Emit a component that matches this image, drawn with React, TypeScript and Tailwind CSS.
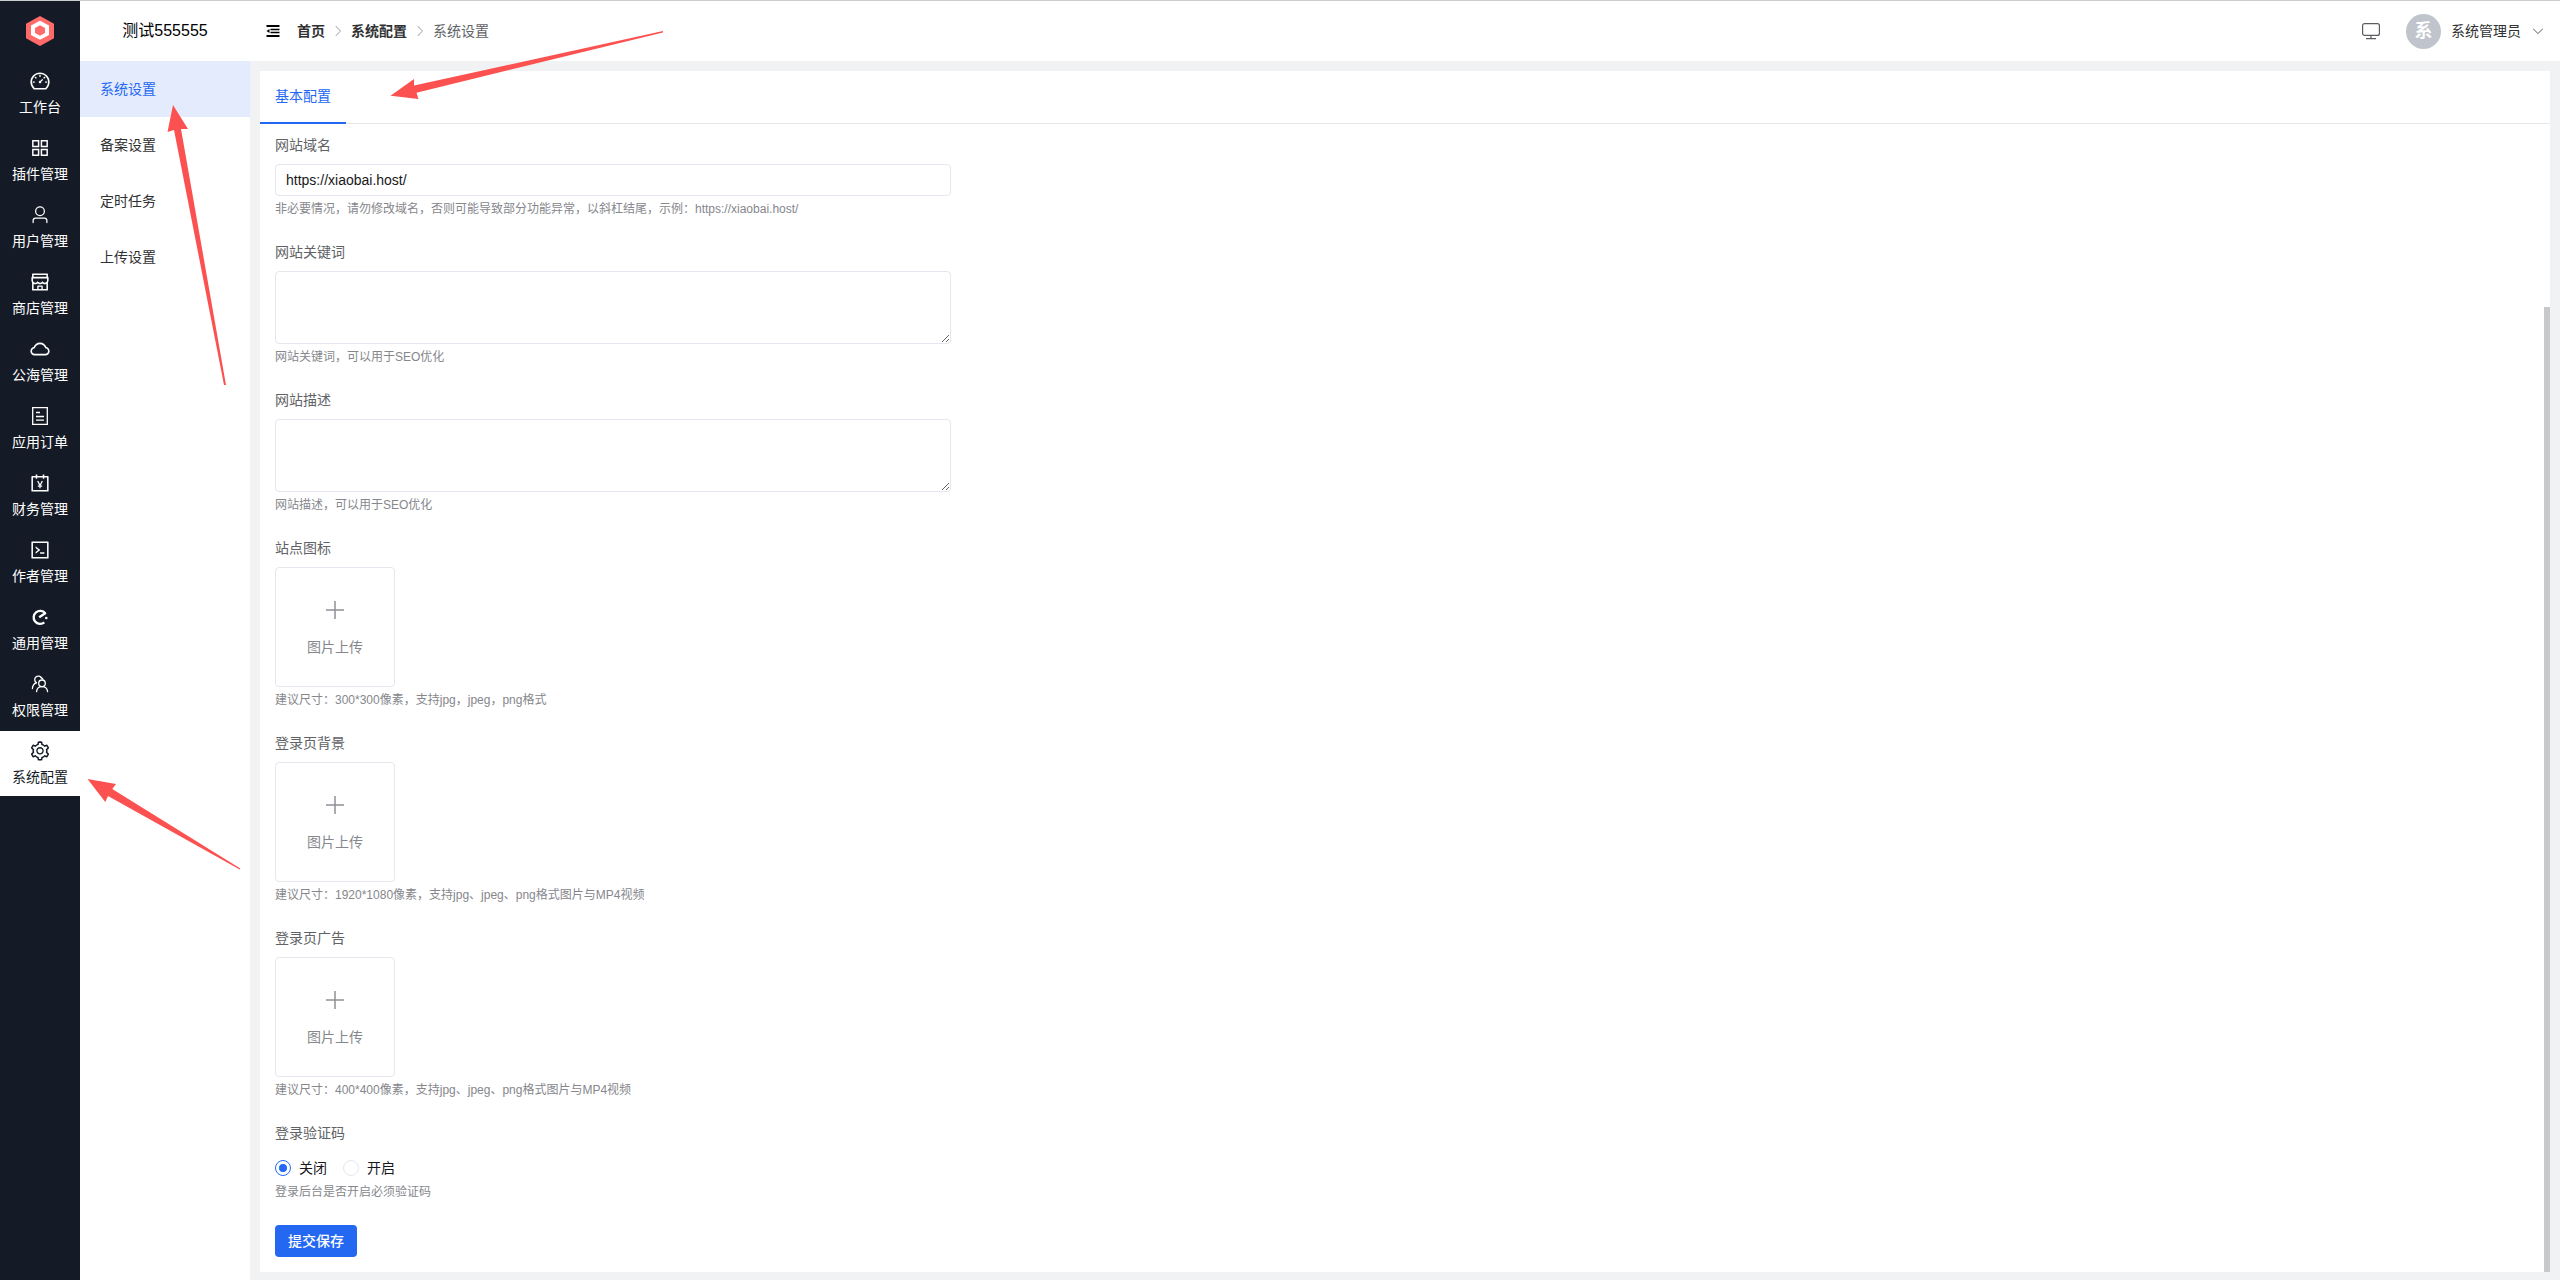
import React from "react";
import {
  AiOutlineDashboard,
  AiOutlineAppstore,
  AiOutlineShop,
  AiOutlineCloud,
  AiOutlineAccountBook,
  AiOutlineCode,
  AiOutlineSetting,
} from "react-icons/ai";

function UserIcon() {
  return (
    <svg viewBox="0 0 1024 1024" width="20" height="20" fill="currentColor" aria-hidden="true">
      <path d="M512 512a192 192 0 1 0 0-384 192 192 0 0 0 0 384m0 64a256 256 0 1 1 0-512 256 256 0 0 1 0 512m320 320v-96a96 96 0 0 0-96-96H288a96 96 0 0 0-96 96v96a32 32 0 1 1-64 0v-96a160 160 0 0 1 160-160h448a160 160 0 0 1 160 160v96a32 32 0 1 1-64 0" />
    </svg>
  );
}

function OrderIcon() {
  return (
    <svg viewBox="0 0 18 18" width="18" height="18" fill="none" stroke="currentColor" strokeWidth="1.3" aria-hidden="true">
      <path d="M1.700 0.700H16.300V17.300H1.700Z" />
      <path d="M5 5.500H9M5 9.500H13M5 13.200H13" />
    </svg>
  );
}

function ElemeIcon() {
  return (
    <svg viewBox="0 0 18 18" width="18" height="18" fill="none" stroke="currentColor" aria-hidden="true">
      <path d="M13.300 14.400A6.500 6.500 0 1 1 14.200 5.300L8.200 9.300" strokeWidth="2.300" strokeLinejoin="round" />
      <circle cx="15.300" cy="10" r="1.300" fill="currentColor" stroke="none" />
    </svg>
  );
}

function TeamIcon() {
  return (
    <svg viewBox="0 0 18 18" width="18" height="18" fill="none" stroke="currentColor" strokeWidth="1.3" strokeLinecap="round" aria-hidden="true">
      <circle cx="11" cy="8.3" r="3.3" />
      <path d="M5.600 16.600C5.800 13.400 8 11.600 11 11.600s5.300 1.800 5.600 5" />
      <path d="M10.600 3.200A3.600 3.600 0 1 0 5.400 7.700" />
      <path d="M10 2.500a3.400 3.400 0 0 1 2 1.700" />
      <path d="M5.400 7.700C3.200 8.700 1.600 10.700 1.400 13.500" />
    </svg>
  );
}

function Logo() {
  return (
    <svg viewBox="0 0 28 30" width="28" height="30" aria-hidden="true">
      <path d="M14 0 28 7.700V22.300L14 30 0 22.300V7.700Z" fill="#ff6b6b" />
      <path d="M14 4.800 23 9.600V19L14 23.800 5 19V9.600Z" fill="#fff" />
      <path d="M14 9.300 19 12V17L14 19.700 9 17V12Z" fill="#ff6b6b" />
    </svg>
  );
}

function Chevron({ size, className }: { size: number; className: string }) {
  return (
    <svg viewBox="0 0 1024 1024" width={size} height={size} fill="currentColor" className={className} aria-hidden="true">
      <path d="M340.864 149.312a30.592 30.592 0 0 0 0 42.752L652.736 512 340.864 831.872a30.592 30.592 0 0 0 0 42.752 29.12 29.12 0 0 0 41.728 0L714.24 534.336a32 32 0 0 0 0-44.672L382.592 149.376a29.12 29.12 0 0 0-41.728 0z" />
    </svg>
  );
}

const mainMenu = [
  { label: "工作台", icon: <AiOutlineDashboard size={22} /> },
  { label: "插件管理", icon: <AiOutlineAppstore size={22} /> },
  { label: "用户管理", icon: <UserIcon /> },
  { label: "商店管理", icon: <AiOutlineShop size={22} /> },
  { label: "公海管理", icon: <AiOutlineCloud size={22} /> },
  { label: "应用订单", icon: <OrderIcon /> },
  { label: "财务管理", icon: <AiOutlineAccountBook size={22} /> },
  { label: "作者管理", icon: <AiOutlineCode size={22} /> },
  { label: "通用管理", icon: <ElemeIcon /> },
  { label: "权限管理", icon: <TeamIcon /> },
  { label: "系统配置", icon: <AiOutlineSetting size={22} />, active: true },
];

const subMenu = ["系统设置", "备案设置", "定时任务", "上传设置"];

const uploads = [
  { id: "site-icon", label: "站点图标", hint: "建议尺寸：300*300像素，支持jpg，jpeg，png格式" },
  { id: "login-bg", label: "登录页背景", hint: "建议尺寸：1920*1080像素，支持jpg、jpeg、png格式图片与MP4视频" },
  { id: "login-ad", label: "登录页广告", hint: "建议尺寸：400*400像素，支持jpg、jpeg、png格式图片与MP4视频" },
];

function Field({ id, label, hint, children }: { id: string; label: string; hint: string; children: React.ReactNode }) {
  return (
    <div className="mb-[22px]">
      <label htmlFor={id} className="mb-2 block leading-[22px] text-[#606266]">
        {label}
      </label>
      {children}
      <p className="mt-[3px] text-xs leading-5 text-[#85878c]">{hint}</p>
    </div>
  );
}

function Radio({ label, defaultChecked }: { label: string; defaultChecked?: boolean }) {
  return (
    <label className="flex items-center gap-2 text-[#17181a]">
      <input
        type="radio"
        name="captcha"
        defaultChecked={defaultChecked}
        className="size-4 appearance-none rounded-full border border-[#e4e7ed] bg-white p-[3px] checked:border-[#2468f2] checked:bg-[#2468f2] checked:bg-clip-content"
      />
      {label}
    </label>
  );
}

function Arrows() {
  return (
    <svg className="pointer-events-none absolute -top-px left-0" width="700" height="900" fill="#fb5251" aria-hidden="true">
      <path d="M173 105 188 129 181 129 226 385 224 385 174 130 167.500 132Z" />
      <path d="M87.500 779 116 784 112.300 789 240.300 868.500 239.700 869.500 108 796 105.300 802Z" />
      <path d="M390.500 95.700 414 79 414 85.500 663 31 663 32.500 416.500 92.700 418.500 99Z" />
    </svg>
  );
}

export default function App() {
  return (
    <div className="relative flex min-h-screen border-t border-[#c9cccc] bg-[#f1f2f4] font-['Liberation_Sans','Noto_Sans_CJK_SC',sans-serif] text-sm text-[#303133]">
      <aside className="w-20 shrink-0 bg-[#151b26] text-white">
        <div className="flex h-[60px] items-center justify-center">
          <Logo />
        </div>
        <nav className="flex flex-col gap-0.5">
          {mainMenu.map((item) => (
            <a
              key={item.label}
              href="#"
              className={
                item.active
                  ? "flex h-[65px] flex-col items-center gap-1 bg-white pt-[9px] leading-[22px] text-[#151b26]"
                  : "flex h-[65px] flex-col items-center gap-1 pt-[9px] leading-[22px]"
              }
            >
              <span className="flex size-[22px] items-center justify-center">{item.icon}</span>
              <span>{item.label}</span>
            </a>
          ))}
        </nav>
      </aside>

      <div className="flex min-w-0 flex-1 flex-col">
        <header className="flex h-[60px] items-center bg-white">
          <div className="w-[170px] shrink-0 text-center text-base text-black">测试555555</div>
          <button type="button" aria-label="折叠菜单" className="ml-4 text-black">
            <svg viewBox="0 0 14 12" width="14" height="12" aria-hidden="true">
              <path d="M.500 0h13v2h-13zM4.500 3.700h9v1.500h-9zM4.500 6.700h9v1.500h-9zM.500 10h13v2h-13zM.500 6 3.500 3.900v4.200z" fill="currentColor" />
            </svg>
          </button>
          <nav className="ml-[17px] flex items-center gap-1.5">
            <a href="#" className="font-bold">首页</a>
            <Chevron size={14} className="text-[#a8abb2]" />
            <a href="#" className="font-bold">系统配置</a>
            <Chevron size={14} className="text-[#a8abb2]" />
            <span className="text-[#606266]">系统设置</span>
          </nav>
          <div className="ml-auto flex items-center pr-[15px]">
            <button type="button" aria-label="显示" className="mr-[25px] text-[#5a5c60]">
              <svg viewBox="0 0 20 18" width="20" height="18" fill="none" stroke="currentColor" strokeWidth="1.200" aria-hidden="true">
                <rect x="1.600" y="1.600" width="16.800" height="11.800" rx="2" />
                <path d="M10 13.400v3M5 16.600h10" />
              </svg>
            </button>
            <span className="flex size-[35px] items-center justify-center rounded-full bg-[#c0c4cc] text-lg font-bold text-white">系</span>
            <button type="button" className="ml-2.5 flex items-center gap-2.5">
              系统管理员
              <Chevron size={14} className="rotate-90 text-[#6b6d72]" />
            </button>
          </div>
        </header>

        <div className="flex flex-1">
          <nav className="w-[170px] shrink-0 bg-white">
            {subMenu.map((label, i) => (
              <a
                key={label}
                href="#"
                className={
                  i === 0
                    ? "flex h-14 items-center bg-[#e4ebfc] px-5 text-[#2468f2]"
                    : "flex h-14 items-center px-5"
                }
              >
                {label}
              </a>
            ))}
          </nav>

          <main className="relative mx-2.5 mt-2.5 mb-2 min-w-0 flex-1 bg-white">
            <div className="flex h-[53px] border-b border-[#e5e7ea]" role="tablist">
              <button
                type="button"
                role="tab"
                aria-selected="true"
                className="-mb-px border-b-2 border-[#2468f2] px-[15px] pb-0.5 text-[#2468f2]"
              >
                基本配置
              </button>
            </div>

            <form className="px-[15px] pt-2.5 pb-[15px]">
              <Field id="domain" label="网站域名" hint="非必要情况，请勿修改域名，否则可能导致部分功能异常，以斜杠结尾，示例：https://xiaobai.host/">
                <input
                  id="domain"
                  type="text"
                  defaultValue="https://xiaobai.host/"
                  className="block h-8 w-[676px] max-w-full rounded border border-[#e4e7ed] px-2.5 text-[#17181a]"
                />
              </Field>
              <Field id="keywords" label="网站关键词" hint="网站关键词，可以用于SEO优化">
                <textarea id="keywords" className="block h-[73px] w-[676px] max-w-full resize-y rounded border border-[#e4e7ed] px-2.5 py-[5px]" />
              </Field>
              <Field id="description" label="网站描述" hint="网站描述，可以用于SEO优化">
                <textarea id="description" className="block h-[73px] w-[676px] max-w-full resize-y rounded border border-[#e4e7ed] px-2.5 py-[5px]" />
              </Field>

              {uploads.map((u) => (
                <Field key={u.id} id={u.id} label={u.label} hint={u.hint}>
                  <button
                    id={u.id}
                    type="button"
                    className="flex size-[120px] flex-col items-center justify-center gap-4 rounded border border-[#e4e7ed] pt-[3px] text-[#85878c]"
                  >
                    <svg viewBox="0 0 20 20" width="20" height="20" stroke="#8f9196" strokeWidth="1.500" aria-hidden="true">
                      <path d="M10 1v18M1 10h18" />
                    </svg>
                    <span className="leading-[22px]">图片上传</span>
                  </button>
                </Field>
              ))}

              <fieldset className="mb-[25px]">
                <legend className="mb-2 leading-[22px] text-[#606266]">登录验证码</legend>
                <div className="flex h-8 items-center gap-4">
                  <Radio label="关闭" defaultChecked />
                  <Radio label="开启" />
                </div>
                <p className="text-xs leading-4 text-[#85878c]">登录后台是否开启必须验证码</p>
              </fieldset>

              <button type="button" className="h-8 rounded bg-[#2468f2] px-[13px] font-medium text-white">
                提交保存
              </button>
            </form>

            <div className="absolute top-[236px] right-0 bottom-0 w-1.5 bg-[#c9c9c9]" />
          </main>
        </div>
      </div>
      <Arrows />
    </div>
  );
}
